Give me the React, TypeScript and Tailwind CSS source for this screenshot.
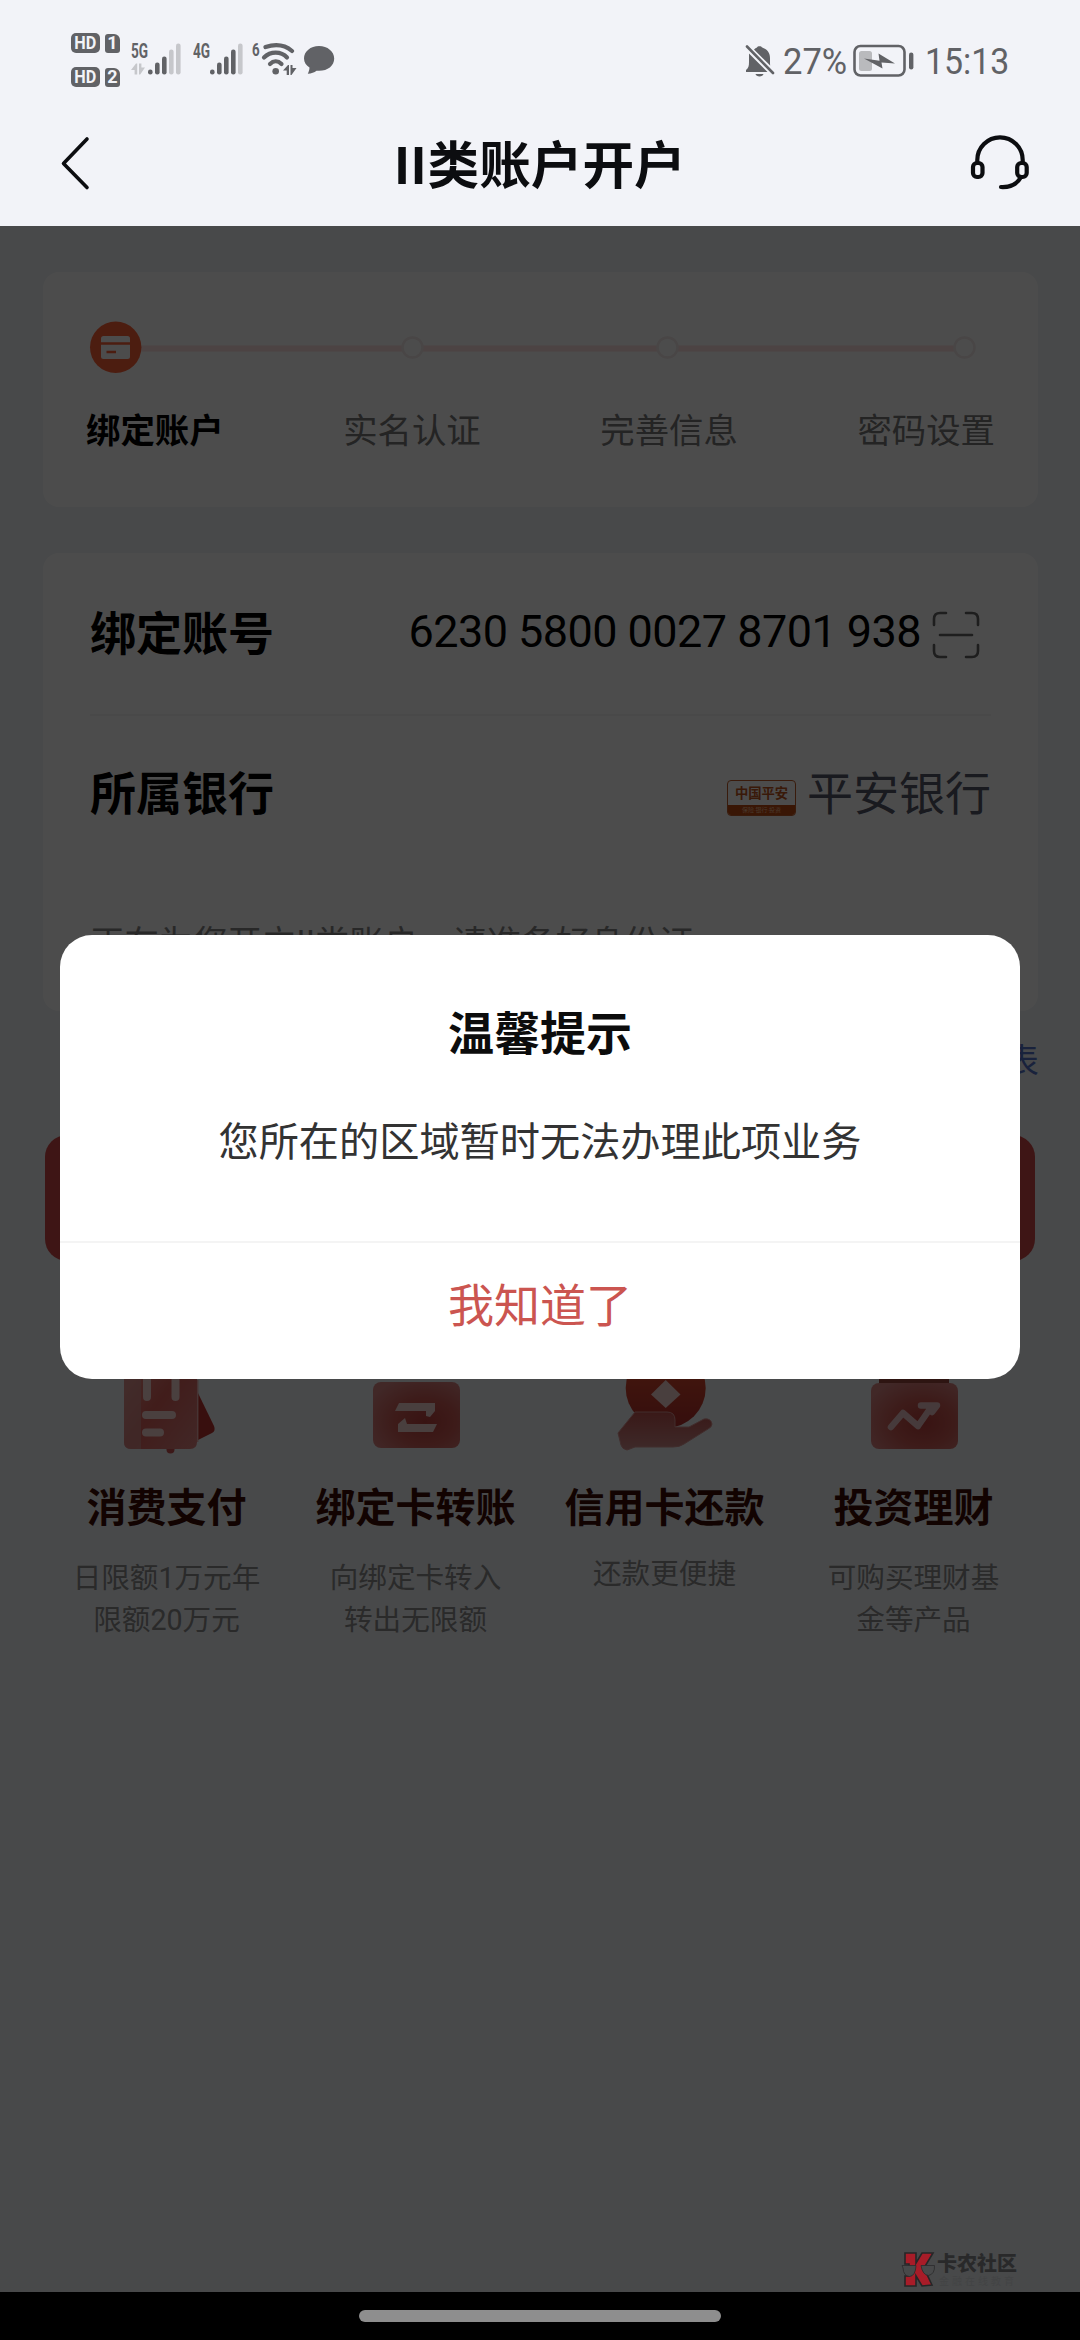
import type { ReactNode } from "react";

const steps = ["绑定账户", "实名认证", "完善信息", "密码设置"];

const features: { title: string; lines: string[]; icon: ReactNode }[] = [
  { title: "消费支付", lines: ["日限额1万元年", "限额20万元"], icon: <ReceiptIcon /> },
  { title: "绑定卡转账", lines: ["向绑定卡转入", "转出无限额"], icon: <TransferIcon /> },
  { title: "信用卡还款", lines: ["还款更便捷"], icon: <RepayIcon /> },
  { title: "投资理财", lines: ["可购买理财基", "金等产品"], icon: <InvestIcon /> },
];

function HdBadge({ sim }: { sim: string }) {
  return (
    <div className="flex h-[20px] items-center gap-[5px] text-[#f2f3f8]">
      <span className="flex h-[20px] w-[29px] items-center justify-center rounded-[5px] bg-[#616266] text-[18px] leading-none font-bold">
        <span className="scale-x-90">HD</span>
      </span>
      <span className="flex h-[19px] w-[15px] items-center justify-center rounded-[3px] rounded-tr-[6px] bg-[#616266] text-[18px] leading-none font-bold">
        {sim}
      </span>
    </div>
  );
}

function SignalBars({ active }: { active: number }) {
  const heights = [5, 12, 18, 25, 31];
  return (
    <svg width="34" height="32" viewBox="0 0 34 32">
      {heights.map((h, i) => (
        <rect
          key={h}
          x={i * 7}
          y={31.5 - h}
          width="4.6"
          height={h}
          rx="2.2"
          fill={i < active ? "#616266" : "#c6c7cb"}
        />
      ))}
    </svg>
  );
}

function DataArrows({ color }: { color: string }) {
  return (
    <svg width="14" height="12" viewBox="0 0 14 12" fill={color}>
      <path d="M0 7 5 0.5H6.2V11.5H3.6V7ZM8 0.5H10.4V4.5H14L9.2 11.5H8Z" />
    </svg>
  );
}

function StatusBar() {
  return (
    <div className="flex h-[119px] items-start justify-between pr-[71px] pl-[71px] text-[#616266]">
      <div className="flex items-start">
        <div className="flex flex-col gap-[14px] pt-[33px]">
          <HdBadge sim="1" />
          <HdBadge sim="2" />
        </div>
        <div className="ml-[11px] flex w-[17px] flex-col gap-[4px] pt-[43px]">
          <span className="origin-left scale-x-[0.68] text-[20px] leading-[16px] font-bold">5G</span>
          <DataArrows color="#c6c7cb" />
        </div>
        <div className="pt-[43px]">
          <SignalBars active={3} />
        </div>
        <span className="ml-[11px] w-[17px] origin-left scale-x-[0.68] pt-[43px] text-[20px] leading-[16px] font-bold">
          4G
        </span>
        <div className="pt-[43px]">
          <SignalBars active={4} />
        </div>
        <span className="ml-[8px] w-[8px] origin-left scale-x-[0.7] pt-[42px] text-[19px] leading-[16px] font-bold">
          6
        </span>
        <svg className="mt-[42px] ml-[1px]" width="36" height="34" viewBox="0 0 36 34" fill="none">
          <g stroke="#616266" strokeWidth="4.2" strokeLinecap="round">
            <path d="M4.5 5C14 2 24 3 31 9" />
            <path d="M3 15.500C9.500 9 20 9 26 15.500" />
            <path d="M9 22C12.500 18.500 17 18.500 20.500 22" />
          </g>
          <circle cx="14.700" cy="29.200" r="3.300" fill="#616266" />
          <path d="M22 28.500 27 23H28V33H25.700V28.500ZM29.500 23H31.500V26H35.500L30.500 33H29.500Z" fill="#616266" />
        </svg>
        <svg className="mt-[45px] ml-[6px]" width="32" height="30" viewBox="0 0 32 30">
          <path
            d="M16 1C7.500 1 1 6.500 1 13.500 1 17.500 3.200 20.500 6.500 22.600 6.400 25 5.800 27 4.800 28.800 8.500 28.500 11.300 27.500 13.500 25.700 23.500 26.800 31.200 21.500 31.200 13.500 31.200 6.500 24.500 1 16 1Z"
            fill="#616266"
          />
        </svg>
      </div>

      <div className="flex items-center pt-[43px] text-[36px] leading-[34px]">
        <svg width="30" height="34" viewBox="0 0 30 34">
          <path
            d="M4 9.500 22.500 28H1V26C3.500 24 4 22 4 18ZM9 5.500C10 4.500 11 4 12 3.600 12.400 1.800 16.600 1.800 17 3.600 22 5 25 9 25 14V19C25 19.500 25 20.500 25.200 21.500ZM10.500 30H18.500C18 33.200 11 33.200 10.500 30Z"
            fill="#616266"
          />
          <path d="M2 2.500 28 29" stroke="#616266" strokeWidth="2.600" strokeLinecap="round" />
        </svg>
        <span className="ml-[8px] w-[64px] origin-left scale-x-[0.96] pt-[2px]">27%</span>
        <svg className="ml-[6px]" width="62" height="34" viewBox="0 0 62 34">
          <rect x="1.500" y="2" width="50" height="29.500" rx="6" fill="none" stroke="#616266" strokeWidth="2.600" />
          <rect x="6" y="7" width="13" height="20" rx="2.500" fill="#b9babd" />
          <path d="M11 14.500 26.500 16.800 25.500 9.500 42 19.500 28.500 18.500 29.500 24.500Z" fill="#616266" />
          <rect x="56" y="8.500" width="4.400" height="17" rx="2.200" fill="#616266" />
        </svg>
        <span className="ml-[10px] w-[84px] origin-left scale-x-[0.94] pt-[2px]">15:13</span>
      </div>
    </div>
  );
}

function NavHeader() {
  return (
    <div className="flex h-[107px] items-start justify-between px-[50px]">
      <svg className="mt-[14px]" width="60" height="60" viewBox="0 0 60 60" fill="none">
        <path d="M37 6 13.500 30.500 37 54.500" stroke="#0c0d10" strokeWidth="3.600" strokeLinecap="round" strokeLinejoin="round" />
      </svg>
      <h1 className="mt-[16px] text-[51.600px] leading-[64px] font-bold text-[#0c0d10]">
        <span className="tracking-[1.500px]">II</span>类账户开户
      </h1>
      <svg className="mt-[14px]" width="60" height="60" viewBox="0 0 60 60" fill="none" stroke="#0c0d10">
        <path d="M7.300 30V27A22.700 22.700 0 0 1 52.700 27V30" strokeWidth="4.200" />
        <rect x="3" y="30" width="9.500" height="14" rx="4" strokeWidth="4.200" />
        <rect x="47.200" y="30" width="9.500" height="14" rx="4" strokeWidth="4.200" />
        <path d="M51 44C47.500 50.500 41 54.500 31 54" strokeWidth="4.200" strokeLinecap="round" />
      </svg>
    </div>
  );
}

function StepTrack() {
  return (
    <svg width="995" height="60" viewBox="43 317 995 60">
      <path d="M140 348.500H965" stroke="#ffe0e0" strokeWidth="6" />
      <circle cx="115.700" cy="347.300" r="25.700" fill="#ff6238" />
      <rect x="101" y="336" width="29" height="23" rx="2.500" fill="#fff" />
      <path d="M101 343.500H130M106.500 352H116" stroke="#ff6238" strokeWidth="2.400" />
      {[412.5, 667.5, 964.5].map((cx) => (
        <circle key={cx} cx={cx} cy="347.500" r="10" fill="#fff" stroke="#f3eaea" strokeWidth="2.500" />
      ))}
    </svg>
  );
}

function ScanIcon() {
  return (
    <svg width="48" height="48" viewBox="0 0 48 48" fill="none" stroke="#666" strokeWidth="2.600" strokeLinecap="round">
      <path d="M2 14V8Q2 2 8 2H14M34 2H40Q46 2 46 8V14M46 34V40Q46 46 40 46H34M14 46H8Q2 46 2 40V34" />
      <path d="M8 24H40" />
    </svg>
  );
}

function PingAnBadge() {
  return (
    <div className="flex h-[36px] w-[69px] flex-col overflow-hidden rounded-[4px] border-[1.500px] border-[#c05a28] text-center text-[#c05520]">
      <span className="h-[24px] text-[13.300px] leading-[26px] font-bold">中国平安</span>
      <span className="flex-1 bg-[#c04c12] text-[6px] leading-[9px] text-[#f0b995]">保险·银行·投资</span>
    </div>
  );
}

function ReceiptIcon() {
  return (
    <svg width="110" height="110" viewBox="111 1345 110 110">
      <defs>
        <linearGradient id="receipt" x1="0" y1="0" x2="1" y2="1">
          <stop offset="0" stopColor="#f09a92" />
          <stop offset="0.500" stopColor="#d9605a" />
          <stop offset="1" stopColor="#dc8482" />
        </linearGradient>
      </defs>
      <path d="M196 1390 213 1425Q215 1430 211 1432L197 1439Z" fill="#bd3330" />
      <circle cx="169.500" cy="1448.500" r="4" fill="#c95252" />
      <path d="M123 1350H196V1441Q196 1448 189 1448H130Q123 1448 123 1441Z" fill="url(#receipt)" />
      <path d="M123 1350H140V1448H130Q123 1448 123 1441Z" fill="#d69a98" opacity="0.600" />
      <g stroke="#f8d6d4" strokeWidth="8" strokeLinecap="round">
        <path d="M146 1365V1396M174.500 1365V1396M145 1414H171M145 1431.500H159" />
      </g>
      <path d="M196.700 1379V1441" stroke="#eeb0ad" strokeWidth="1.500" />
    </svg>
  );
}

function CardGradient({ id }: { id: string }) {
  return (
    <defs>
      <radialGradient id={id} cx="0.600" cy="0.600" r="0.700">
        <stop offset="0" stopColor="#bc413d" />
        <stop offset="0.500" stopColor="#cc5b55" />
        <stop offset="1" stopColor="#d98583" />
      </radialGradient>
    </defs>
  );
}

function TransferIcon() {
  return (
    <svg width="110" height="110" viewBox="360 1345 110 110">
      <CardGradient id="transfer" />
      <rect x="372" y="1381" width="87" height="66" rx="8" fill="url(#transfer)" />
      <path d="M398 1402H434V1410L429 1416 425 1415V1410H394ZM404 1417 406 1423H436L432 1431H397V1423Z" fill="#f4d2d0" />
    </svg>
  );
}

function RepayIcon() {
  return (
    <svg width="110" height="110" viewBox="609 1345 110 110">
      <defs>
        <linearGradient id="coin" x1="0" y1="0" x2="0" y2="1">
          <stop offset="0.300" stopColor="#dc4a2c" />
          <stop offset="1" stopColor="#b02e2d" />
        </linearGradient>
        <linearGradient id="hand" x1="0" y1="0" x2="0" y2="1">
          <stop offset="0" stopColor="#c05450" />
          <stop offset="1" stopColor="#cf8c8b" />
        </linearGradient>
      </defs>
      <circle cx="664.700" cy="1387" r="40" fill="url(#coin)" />
      <path d="M664.700 1379 679.500 1393.500 664.700 1407 650 1393.500Z" fill="#f4d2d0" />
      <path
        d="M634 1411H666Q674 1411 674 1419V1426H688L703 1418Q710 1417 711 1423 711 1426 707 1428L683 1443Q679 1446 672 1446H634L626 1449Q621 1448 620 1444L617 1432Z"
        fill="url(#hand)"
        stroke="#d99694"
      />
    </svg>
  );
}

function InvestIcon() {
  return (
    <svg width="110" height="110" viewBox="858 1345 110 110">
      <CardGradient id="invest" />
      <rect x="878" y="1366" width="70" height="20" rx="4" fill="#9c493c" />
      <rect x="870" y="1382" width="87" height="66" rx="8" fill="url(#invest)" />
      <path
        d="M890 1426 902 1412 917 1425 931 1405M920 1404.500H936L931 1411"
        fill="none"
        stroke="#ecc4c5"
        strokeWidth="6.500"
        strokeLinecap="round"
        strokeLinejoin="round"
      />
    </svg>
  );
}

function PageContent() {
  return (
    <>
      <section className="mt-[46px] h-[235px] rounded-[16px] bg-white pt-[45px]">
        <StepTrack />
        <div className="mt-[28px] flex justify-between px-[43px] text-[34.400px] leading-[52px] text-[#787878]">
          {steps.map((step, i) => (
            <span key={step} className={i === 0 ? "font-bold text-black" : ""}>
              {step}
            </span>
          ))}
        </div>
      </section>

      <section className="mt-[46px] h-[458px] rounded-[16px] bg-white pr-[47px] pl-[47px]">
        <div className="flex h-[163px] items-center justify-between border-b-2 border-[#f4f5f6]">
          <span className="text-[46px] leading-[60px] font-bold text-black">绑定账号</span>
          <div className="flex items-center pr-[11px]">
            <span className="pb-[4px] text-[45px] leading-[60px] tracking-[-0.550px] text-black">
              6230 5800 0027 8701 938
            </span>
            <span className="ml-[11px] pt-[3px]">
              <ScanIcon />
            </span>
          </div>
        </div>
        <div className="flex h-[155px] items-center justify-between">
          <span className="text-[46px] leading-[60px] font-bold text-black">所属银行</span>
          <div className="flex items-center gap-[11px]">
            <span className="pt-[8px]">
              <PingAnBadge />
            </span>
            <span className="text-[46px] leading-[60px] text-[#565769]">平安银行</span>
          </div>
        </div>
        <p className="mt-[46px] text-[34.400px] leading-[52px] text-[#888]">
          正在为您开立II类账户，请准备好身份证
        </p>
      </section>

      <p className="mt-[24px] mr-[-1px] text-right text-[34.400px] leading-[52px] text-[#5572c8]">支持银行列表</p>

      <button className="mr-[3px] ml-[2px] mt-[48px] h-[126px] rounded-[22px] bg-[#cf4747] text-[46px] text-white">
        下一步
      </button>

      <section className="ml-[-1px] mt-[85px] grid grid-cols-4">
        {features.map(({ title, lines, icon }) => (
          <div key={title} className="flex flex-col items-center">
            {icon}
            <h3 className="mt-[23px] text-[40px] leading-[60px] font-bold text-[#3c0c06]">{title}</h3>
            <div className={`text-center text-[28.600px] leading-[42px] text-[#8c8c8c] ${lines.length > 1 ? "mt-[18px]" : "mt-[14px]"}`}>
              {lines.map((line) => (
                <p key={line}>{line}</p>
              ))}
            </div>
          </div>
        ))}
      </section>
    </>
  );
}

function NoticeDialog() {
  return (
    <div className="flex h-[444px] w-[960px] flex-col rounded-[32px] bg-white text-center">
      <h2 className="mt-[69px] text-[46px] leading-[60px] font-bold text-[#0c0c0c]">温馨提示</h2>
      <p className="mt-[49px] text-[40.200px] leading-[60px] text-[#333]">您所在的区域暂时无法办理此项业务</p>
      <button className="mt-auto h-[138px] border-t-2 border-[#f4f4f4] pb-[11px] text-[46px] leading-[60px] text-[#cb5550]">
        我知道了
      </button>
    </div>
  );
}

function Watermark() {
  return (
    <div className="absolute top-[2025px] left-[900px] flex items-start">
      <svg width="37" height="38" viewBox="0 0 37 38">
        <path
          d="M5 2H16V12L22 2H33L24 17 32 34 22 35 16 25V35H5V25H9V13H5Z"
          fill="#a81c28"
          stroke="#262627"
          strokeWidth="1.600"
        />
        <g fill="#48494a" stroke="#2b2b2c" strokeWidth="0.800">
          <path d="M2 14.500H16Q15.500 25 9.500 25.500 3.500 25 3 17Z" />
          <path d="M21 14.500H34.500Q35 23 28.500 24.500 22.500 24 21 14.500Z" />
        </g>
      </svg>
      <div className="flex flex-col pt-[2px]">
        <span className="h-[23px] text-[20px] leading-[23px] font-black text-[#29292a]">卡农社区</span>
        <span className="pl-[2px] text-[10px] leading-[12px] tracking-[3px] text-[#434445]">金融在线教育</span>
      </div>
    </div>
  );
}

export default function App() {
  return (
    <div className="flex h-[2340px] w-[1080px] flex-col overflow-hidden bg-[#f2f3f8] font-[Roboto,'Noto_Sans_CJK_SC',sans-serif]">
      <header>
        <StatusBar />
        <NavHeader />
      </header>
      <main className="relative flex h-[2066px] flex-col bg-[#f1f4f7] pr-[42px] pl-[43px]">
        <PageContent />
        <div className="absolute inset-0 flex items-start justify-center bg-black/70 pt-[709px]">
          <NoticeDialog />
        </div>
        <Watermark />
      </main>
      <footer className="flex h-[48px] items-center justify-center bg-black">
        <div className="h-[12px] w-[362px] rounded-full bg-[#8e8e8e]" />
      </footer>
    </div>
  );
}
